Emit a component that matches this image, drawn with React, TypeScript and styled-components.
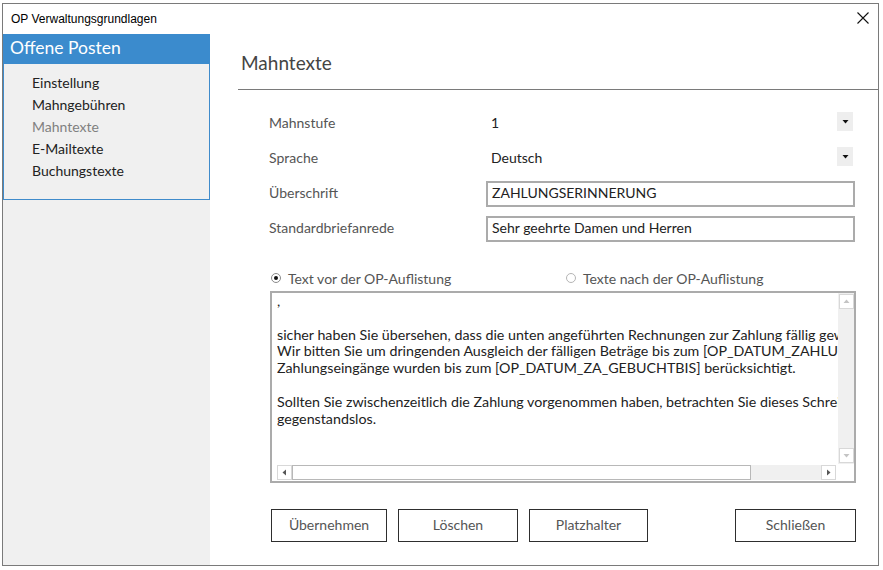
import React from 'react';
import styled, { createGlobalStyle } from 'styled-components';

const GlobalStyle = createGlobalStyle`
   html, body {
      margin: 0;
      padding: 0;
      background: #ffffff;
   }
   body {
      font-family: Lato, "Liberation Sans", sans-serif;
      color: #222222;
   }
`;

const navItems = ['Einstellung', 'Mahngebühren', 'Mahntexte', 'E-Mailtexte', 'Buchungstexte'];

const letterLines = [
   ',',
   '',
   'sicher haben Sie übersehen, dass die unten angeführten Rechnungen zur Zahlung fällig geworden sind.',
   'Wir bitten Sie um dringenden Ausgleich der fälligen Beträge bis zum [OP_DATUM_ZAHLUNGSZIEL].',
   'Zahlungseingänge wurden bis zum [OP_DATUM_ZA_GEBUCHTBIS] berücksichtigt.',
   '',
   'Sollten Sie zwischenzeitlich die Zahlung vorgenommen haben, betrachten Sie dieses Schreiben als',
   'gegenstandslos.',
];

const CloseIcon = () => (
   <svg width="12" height="12" viewBox="0 0 12 12">
      <path d="M0.5 0.5 L11.5 11.5 M11.5 0.5 L0.5 11.5" stroke="#111" strokeWidth="1.1" fill="none" />
   </svg>
);

const Tri = ({ dir, color }: { dir: 'up' | 'down' | 'left' | 'right'; color: string }) => {
   const paths = {
      up: 'M0.5 5 L3.5 1.5 L6.5 5 Z',
      down: 'M0.5 2 L6.5 2 L3.5 5.5 Z',
      left: 'M5 0.5 L1.5 3.5 L5 6.5 Z',
      right: 'M2 0.5 L5.5 3.5 L2 6.5 Z',
   };
   return (
      <svg width="7" height="7" viewBox="0 0 7 7">
         <path d={paths[dir]} fill={color} />
      </svg>
   );
};

const App = () => {
   return (
      <>
         <GlobalStyle />
         <Window>
            <TitleBar>
               <TitleText>OP Verwaltungsgrundlagen</TitleText>
               <CloseButton>
                  <CloseIcon />
               </CloseButton>
            </TitleBar>
            <Body>
               <Sidebar>
                  <SidebarHeader>Offene Posten</SidebarHeader>
                  <NavBox>
                     {navItems.map((item) => (
                        <NavItem key={item} $active={item === 'Mahntexte'}>
                           {item}
                        </NavItem>
                     ))}
                  </NavBox>
               </Sidebar>
               <Main>
                  <Heading>Mahntexte</Heading>
                  <Form>
                     <FieldGrid>
                        <Label>Mahnstufe</Label>
                        <SelectBox>
                           <SelectValue>1</SelectValue>
                           <SelectArrow>
                              <Tri dir="down" color="#111" />
                           </SelectArrow>
                        </SelectBox>
                        <Label>Sprache</Label>
                        <SelectBox>
                           <SelectValue>Deutsch</SelectValue>
                           <SelectArrow>
                              <Tri dir="down" color="#111" />
                           </SelectArrow>
                        </SelectBox>
                        <Label>Überschrift</Label>
                        <TextInput>ZAHLUNGSERINNERUNG</TextInput>
                        <Label>Standardbriefanrede</Label>
                        <TextInput>Sehr geehrte Damen und Herren</TextInput>
                     </FieldGrid>

                     <RadioRow>
                        <RadioOption>
                           <RadioCircle $checked />
                           Text vor der OP-Auflistung
                        </RadioOption>
                        <RadioOption>
                           <RadioCircle $checked={false} />
                           Texte nach der OP-Auflistung
                        </RadioOption>
                     </RadioRow>

                     <TextBox>
                        <TextContent>{letterLines.join('\n')}</TextContent>
                        <VScroll>
                           <ScrollBtn>
                              <Tri dir="up" color="#c4c4c4" />
                           </ScrollBtn>
                           <ScrollBtn>
                              <Tri dir="down" color="#c4c4c4" />
                           </ScrollBtn>
                        </VScroll>
                        <HScroll>
                           <ScrollBtn>
                              <Tri dir="left" color="#555" />
                           </ScrollBtn>
                           <Thumb />
                           <Track />
                           <ScrollBtn>
                              <Tri dir="right" color="#555" />
                           </ScrollBtn>
                        </HScroll>
                        <Corner />
                     </TextBox>

                     <ButtonRow>
                        <Button $w="116px">Übernehmen</Button>
                        <Button $w="120px">Löschen</Button>
                        <Button $w="119px">Platzhalter</Button>
                        <Spacer />
                        <Button $w="121px">Schließen</Button>
                     </ButtonRow>
                  </Form>
               </Main>
            </Body>
         </Window>
      </>
   );
};

const Window = styled.div`
   box-sizing: border-box;
   margin: 3px 0 0 2px;
   width: 877px;
   height: 563px;
   border: 1px solid #7a7a7a;
   display: flex;
   flex-direction: column;
   background: #ffffff;
`;

const TitleBar = styled.div`
   height: 30px;
   display: flex;
   align-items: center;
   justify-content: space-between;
   padding: 0 9px 0 8px;
   flex-shrink: 0;
`;

const TitleText = styled.span`
   font-family: "Liberation Sans", Arial, sans-serif;
   font-size: 12px;
   color: #000000;
`;

const CloseButton = styled.div`
   width: 12px;
   height: 12px;
   display: flex;
   margin-top: -2px;
`;

const Body = styled.div`
   flex: 1;
   display: flex;
   min-height: 0;
`;

const Sidebar = styled.div`
   width: 207px;
   background: #f0f0f0;
   display: flex;
   flex-direction: column;
   flex-shrink: 0;
`;

const SidebarHeader = styled.div`
   height: 30px;
   background: #3b8bcd;
   color: #ffffff;
   font-size: 17.5px;
   line-height: 27px;
   padding-left: 7px;
`;

const NavBox = styled.div`
   box-sizing: border-box;
   height: 136px;
   border: 1px solid #3f8bcb;
   border-top: none;
   padding: 8px 0 0 28px;
`;

const NavItem = styled.div<{ $active: boolean }>`
   font-size: 14px;
   line-height: 22px;
   color: ${({ $active }) => ($active ? '#808080' : '#222222')};
`;

const Main = styled.div`
   flex: 1;
   display: flex;
   flex-direction: column;
   padding-left: 28px;
`;

const Heading = styled.div`
   box-sizing: border-box;
   height: 56px;
   border-bottom: 1px solid #7a7a7a;
   padding: 16px 0 0 3px;
   font-size: 19px;
   line-height: 26px;
   color: #444444;
`;

const Form = styled.div`
   display: flex;
   flex-direction: column;
   padding: 15px 22px 0 31px;
`;

const FieldGrid = styled.div`
   display: grid;
   grid-template-columns: 217px 369px;
   grid-auto-rows: 35px;
   align-items: center;
`;

const Label = styled.div`
   font-size: 14px;
   color: #555555;
   margin-top: 0;
`;

const SelectBox = styled.div`
   display: flex;
   align-items: center;
   justify-content: space-between;
   height: 19px;
   margin-top: -2px;
`;

const SelectValue = styled.span`
   font-size: 14px;
   color: #222222;
   padding-left: 5px;
   margin-top: 1px;
`;

const SelectArrow = styled.div`
   width: 16px;
   height: 19px;
   margin-right: 2px;
   background: #eeeeee;
   display: flex;
   align-items: center;
   justify-content: center;
`;

const TextInput = styled.div`
   box-sizing: border-box;
   height: 26px;
   border: 2px solid #ababab;
   padding-left: 4px;
   font-size: 14px;
   line-height: 20px;
   color: #222222;
   margin-top: 3px;
`;

const RadioRow = styled.div`
   display: grid;
   grid-template-columns: 295px auto;
   height: 26px;
   margin-top: 20px;
   padding-left: 2px;
   align-items: center;
`;

const RadioOption = styled.label`
   display: flex;
   align-items: center;
   gap: 7px;
   font-size: 14px;
   color: #555555;
`;

const RadioCircle = styled.span<{ $checked: boolean }>`
   box-sizing: border-box;
   width: 10px;
   height: 10px;
   border-radius: 50%;
   border: 1px solid ${({ $checked }) => ($checked ? '#8a8a8a' : '#b5b5b5')};
   background: #ffffff;
   display: flex;
   align-items: center;
   justify-content: center;

   &::after {
      content: '';
      width: 4px;
      height: 4px;
      border-radius: 50%;
      background: ${({ $checked }) => ($checked ? '#111111' : 'transparent')};
   }
`;

const TextBox = styled.div`
   box-sizing: border-box;
   width: 586px;
   height: 192px;
   margin-left: 1px;
   border: 2px solid #ababab;
   padding: 0 0 1px 5px;
   display: grid;
   grid-template-columns: 1fr 16px;
   grid-template-rows: 1fr 16px;
`;

const TextContent = styled.div`
   overflow: hidden;
   white-space: pre;
   font-size: 14.25px;
   line-height: 16.8px;
   padding-top: 0;
   color: #222222;
`;

const VScroll = styled.div`
   background: #f0f0f0;
   display: flex;
   flex-direction: column;
   justify-content: space-between;
   align-items: center;
   padding: 1px 0;
`;

const HScroll = styled.div`
   display: flex;
   align-items: center;
   padding-right: 2px;
   background: #ffffff;
`;

const ScrollBtn = styled.div`
   box-sizing: border-box;
   width: 15px;
   height: 15px;
   border: 1px solid #d8d8d8;
   background: #ffffff;
   display: flex;
   align-items: center;
   justify-content: center;
   flex-shrink: 0;
`;

const Thumb = styled.div`
   box-sizing: border-box;
   width: 459px;
   height: 15px;
   border: 1px solid #b8b8b8;
   background: #ffffff;
   flex-shrink: 0;
`;

const Track = styled.div`
   flex: 1;
   height: 15px;
   background: #f0f0f0;
`;

const Corner = styled.div`
   background: #ffffff;
`;

const ButtonRow = styled.div`
   display: flex;
   gap: 11px;
   margin-top: 26px;
   padding-left: 2px;
`;

const Spacer = styled.div`
   flex: 1;
`;

const Button = styled.button<{ $w: string }>`
   box-sizing: border-box;
   width: ${({ $w }) => $w};
   height: 33px;
   border: 1px solid #2e2e2e;
   background: #ffffff;
   font-family: Lato, "Liberation Sans", sans-serif;
   font-size: 14px;
   color: #555555;
   padding: 0 0 2px 0;
`;

export default App;
